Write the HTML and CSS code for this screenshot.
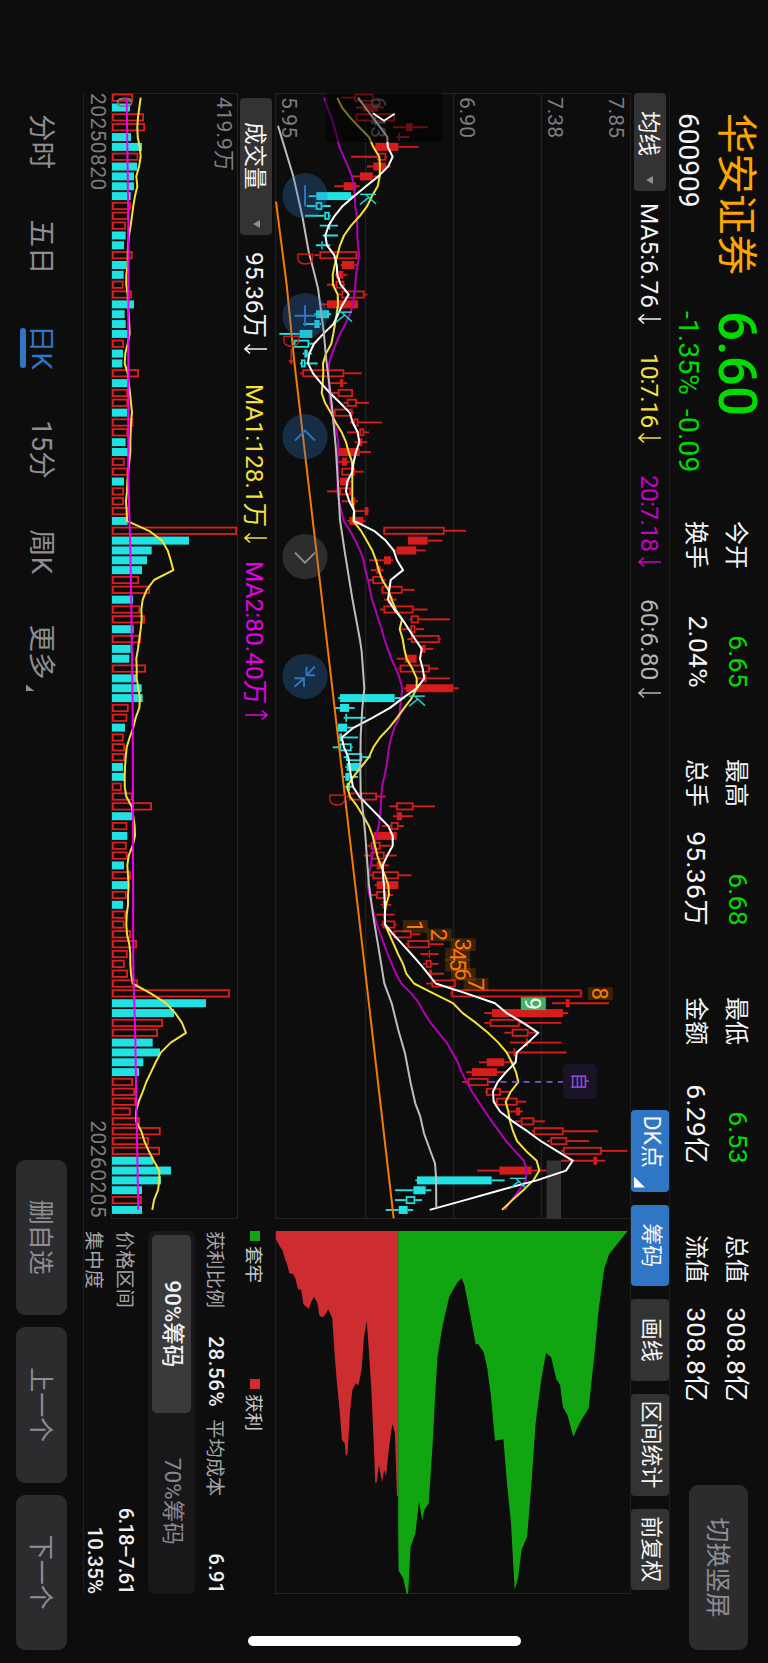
FILE: index.html
```html
<!DOCTYPE html>
<html lang="zh-CN">
<head>
<meta charset="UTF-8">
<meta name="viewport" content="width=device-width, initial-scale=1.0">
<title>华安证券 600909</title>
<link rel="stylesheet" href="styles.css">
</head>
<body>

<div class="page">
<div class="screen">

  <header class="header">
    <div class="title">
      <div class="name">华安证券</div>
      <div class="code">600909</div>
    </div>
    <div class="quote">
      <div class="price">6.60</div>
      <div class="change"><span>-1.35%</span><span>-0.09</span></div>
    </div>
    <div class="stats">
      <div class="stat"><span>今开</span><b class="down">6.65</b></div>
      <div class="stat"><span>最高</span><b class="down">6.68</b></div>
      <div class="stat"><span>最低</span><b class="down">6.53</b></div>
      <div class="stat"><span>总值</span><b>308.8亿</b></div>
      <div class="stat"><span>换手</span><b>2.04%</b></div>
      <div class="stat"><span>总手</span><b>95.36万</b></div>
      <div class="stat"><span>金额</span><b>6.29亿</b></div>
      <div class="stat"><span>流值</span><b>308.8亿</b></div>
    </div>
    <button class="switch">切换竖屏</button>
  </header>

  <main class="main">
    <div class="toolbar">
      <div class="select select-ma">均线<i class="caret"></i></div>
      <div class="ma ma5">MA5:6.76<svg class="arrow" viewBox="0 0 12 24"><path d="M6 1V23M1.5 18L6 23L10.5 18"/></svg></div>
      <div class="ma ma10">10:7.16<svg class="arrow" viewBox="0 0 12 24"><path d="M6 1V23M1.5 18L6 23L10.5 18"/></svg></div>
      <div class="ma ma20">20:7.18<svg class="arrow" viewBox="0 0 12 24"><path d="M6 1V23M1.5 18L6 23L10.5 18"/></svg></div>
      <div class="ma ma60">60:6.80<svg class="arrow" viewBox="0 0 12 24"><path d="M6 1V23M1.5 18L6 23L10.5 18"/></svg></div>
      <div class="tools">
        <div class="tool active dk">DK点<i class="corner"></i></div>
        <div class="tool active">筹码</div>
        <div class="tool">画线</div>
        <div class="tool wide">区间统计</div>
        <div class="tool">前复权</div>
      </div>
    </div>

    <div class="content">
      <section class="charts">
        <svg id="priceChart" class="price-chart" viewBox="0 0 1126 355"></svg>
        <div class="vol-bar">
          <div class="select select-vol">成交量<i class="caret"></i></div>
          <div class="ma vol">95.36万<svg class="arrow" viewBox="0 0 12 24"><path d="M6 1V23M1.5 18L6 23L10.5 18"/></svg></div>
          <div class="ma vol-ma1">MA1:128.1万<svg class="arrow" viewBox="0 0 12 24"><path d="M6 1V23M1.5 18L6 23L10.5 18"/></svg></div>
          <div class="ma vol-ma2">MA2:80.40万<svg class="arrow" viewBox="0 0 12 24"><path d="M6 23V1M1.5 6L6 1L10.5 6"/></svg></div>
        </div>
        <svg id="volChart" class="vol-chart" viewBox="0 0 1126 127"></svg>
        <div class="dates"><span>20250820</span><span>20260205</span></div>
      </section>

      <aside class="chips">
        <svg id="chipChart" class="chip-chart" viewBox="0 0 363 355"></svg>
        <div class="legend">
          <span><i class="dot green"></i>套牢</span>
          <span><i class="dot red"></i>获利</span>
        </div>
        <div class="chip-row">
          <span>获利比例</span><b class="ratio">28.56%</b><span>平均成本</span><b class="last">6.91</b>
        </div>
        <div class="chip-tabs">
          <div class="chip-tab active">90%筹码</div>
          <div class="chip-tab">70%筹码</div>
        </div>
        <div class="chip-list">
          <div class="chip-row"><span>价格区间</span><b class="last range">6.18–7.61</b></div>
          <div class="chip-row"><span>集中度</span><b class="last">10.35%</b></div>
        </div>
      </aside>
      <div class="home"></div>
    </div>
  </main>

  <footer class="footer">
    <nav class="periods">
      <a>分时</a>
      <a>五日</a>
      <a class="active">日K</a>
      <a>15分</a>
      <a>周K</a>
      <a class="more">更多<i class="corner"></i></a>
    </nav>
    <div class="actions">
      <button>删自选</button>
      <button>上一个</button>
      <button>下一个</button>
    </div>
  </footer>

</div>
</div>

<script src="chart.js"></script>
</body>
</html>
```
FILE: styles.css
```css
* {
  box-sizing: border-box;
}

body {
  margin: 0;
  background: #0d0d0d;
  color: #f5f5f5;
  font-family: Roboto, "Noto Sans CJK SC", sans-serif;
}

.page {
  width: 768px;
  height: 1663px;
  overflow: hidden;
}

/* landscape screen shown on a portrait page */
.screen {
  width: 1663px;
  height: 768px;
  transform-origin: 0 0;
  transform: translateX(768px) rotate(90deg);
  display: flex;
  flex-direction: column;
  white-space: nowrap;
}

b {
  font-weight: 400;
}

i {
  display: inline-block;
}

button {
  padding: 0 0 4px;
  border: none;
  border-radius: 9px;
  background: #2c2c2e;
  color: #8e8e93;
  font-family: inherit;
  font-size: 25px;
}

/* header */
.header {
  display: flex;
  height: 98px;
  padding-left: 113px;
}

.title {
  width: 198px;
}

.name {
  height: 62px;
  line-height: 64px;
  font-size: 40.5px;
  color: #ffa500;
}

.code {
  height: 36px;
  line-height: 36px;
  font-size: 28px;
}

.quote {
  width: 210px;
  color: #00dc00;
}

.price {
  height: 62px;
  line-height: 62px;
  font-size: 53px;
  font-weight: 500;
}

.change {
  display: flex;
  gap: 14px;
  height: 36px;
  line-height: 36px;
  font-size: 28px;
  letter-spacing: 0.2px;
}

.stats {
  display: grid;
  grid-template-columns: repeat(4, 167px);
  grid-auto-rows: 39.5px;
  column-gap: 71px;
  padding-top: 10px;
}

.stat {
  display: flex;
  justify-content: space-between;
  align-items: center;
  font-size: 24px;
}

.stat b {
  font-size: 26.5px;
  letter-spacing: 0.3px;
}

.down {
  color: #00dc00;
}

.switch {
  width: 165px;
  height: 59px;
  margin: 20px 0 0 83px;
}

/* indicator bars */
.main {
  width: 1501px;
  height: 587px;
  margin-left: 93px;
  border-bottom: 1px solid #1f1f1f;
}

.toolbar {
  display: flex;
  align-items: center;
  height: 40px;
  border-top: 1px solid #1f1f1f;
  border-bottom: 1px solid #1f1f1f;
}

.select {
  display: flex;
  align-items: center;
  height: 32px;
  padding-bottom: 2px;
  border-radius: 4px;
  background: #333;
  font-size: 22.5px;
}

.select-ma {
  width: 98px;
  padding-left: 18px;
  margin-right: 12px;
}

.caret {
  margin-left: 20px;
  margin-top: 2px;
  border: 4.5px solid transparent;
  border-top: 7px solid #8e8e93;
  border-bottom: none;
}

.ma {
  display: flex;
  align-items: center;
  font-size: 24.5px;
}

.arrow {
  width: 12px;
  height: 24px;
  margin-left: 5px;
  fill: none;
  stroke: currentColor;
  stroke-width: 1.6;
}

.ma5 {
  width: 150px;
}

.ma10 {
  width: 122px;
  color: #f5e13c;
  letter-spacing: -1px;
}

.ma20 {
  width: 124px;
  color: #c800c8;
  letter-spacing: -0.7px;
}

.ma60 {
  color: #b4b4b4;
}

.ma60 .arrow {
  margin-left: 7px;
}

.tools {
  display: flex;
  gap: 13px;
  margin-left: auto;
  margin-right: 4px;
}

.tool {
  position: relative;
  width: 81.5px;
  height: 38px;
  line-height: 36px;
  border-radius: 4px;
  background: #333;
  font-size: 22px;
  text-align: center;
}

.tool.active {
  background: #2f76c5;
}

.tool.wide {
  width: 102px;
}

.tool.dk {
  padding-right: 18px;
  font-size: 23px;
}

.corner {
  position: absolute;
  right: 4px;
  bottom: 3px;
  width: 11px;
  height: 11px;
  background: #fff;
  clip-path: polygon(100% 0, 100% 100%, 0 100%);
}

.vol-bar {
  display: flex;
  align-items: center;
  height: 37px;
}

.select-vol {
  width: 137px;
  margin-left: 5px;
  margin-right: 17px;
  padding-left: 24px;
}

.select-vol .caret {
  margin-left: 30px;
}

.vol {
  width: 132px;
}

.vol-ma1 {
  width: 177px;
  color: #f5e13c;
}

.vol-ma2 {
  color: #e600e6;
}

/* charts */
.content {
  position: relative;
  display: flex;
  gap: 12px;
}

.charts {
  width: 1126px;
}

.price-chart,
.vol-chart,
.chip-chart {
  display: block;
}

.price-chart {
  width: 1126px;
  height: 355px;
}

.vol-chart {
  width: 1126px;
  height: 127px;
}

.chip-chart {
  width: 363px;
  height: 355px;
}

.grid {
  stroke: #232323;
  stroke-width: 1.2;
}

.axis {
  fill: #7d7d82;
  font-size: 21px;
}

.line {
  fill: none;
  stroke-width: 2;
  stroke-linejoin: round;
}

.mark {
  font-size: 22px;
  text-anchor: middle;
}

.signal {
  font-size: 22px;
  font-weight: 300;
  text-anchor: middle;
}

.dates {
  display: flex;
  justify-content: space-between;
  height: 27px;
  line-height: 26px;
  padding: 0 1px 0 0;
  color: #7d7d82;
  font-size: 21px;
  letter-spacing: 0.4px;
}

/* chip distribution */
.chips {
  width: 363px;
}

.legend {
  display: flex;
  height: 42px;
  align-items: center;
  padding-bottom: 2px;
  font-size: 18.5px;
  color: #c8c8c8;
}

.legend span {
  display: flex;
  align-items: center;
  width: 148px;
}

.dot {
  width: 10px;
  height: 10px;
  margin-right: 5px;
}

.dot.green {
  background: #12a512;
}

.dot.red {
  background: #cd2d30;
}

.chip-row {
  display: flex;
  align-items: center;
  height: 35px;
  padding-bottom: 2px;
  font-size: 19.3px;
  color: #a5a5a8;
}

.chip-row b {
  font-size: 20.5px;
  font-weight: 500;
  color: #f0f0f0;
}

.chip-row .ratio {
  margin: 0 12px 0 28px;
  letter-spacing: 0.6px;
}

.chip-row .last {
  margin-left: auto;
}

.chip-row .range {
  letter-spacing: -0.9px;
}

.chip-tabs {
  display: flex;
  height: 47px;
  margin-top: 3px;
  padding: 4px;
  border-radius: 7px;
  background: #18181b;
}

.chip-tab {
  width: 178px;
  line-height: 37px;
  border-radius: 5px;
  text-align: center;
  font-size: 22.5px;
  color: #8a8a8e;
}

.chip-tab.active {
  background: #3a3a3c;
  color: #f0f0f0;
  font-weight: 500;
}

.chip-list {
  padding-top: 7px;
}

.chip-list .chip-row {
  height: 31px;
}

.home {
  position: absolute;
  left: 1543px;
  top: 109px;
  width: 10px;
  height: 273px;
  border-radius: 5px;
  background: #fff;
}

/* footer */
.footer {
  display: flex;
  justify-content: space-between;
  height: 83px;
  padding: 16px 13px 0 114px;
}

.periods {
  display: flex;
  gap: 50.5px;
  font-size: 27.5px;
  line-height: 52px;
  color: #8e8e93;
}

.periods a {
  position: relative;
}

.periods .active {
  color: #2f76c5;
}

.periods .active::after {
  content: "";
  position: absolute;
  left: 3px;
  top: 41px;
  width: 40px;
  height: 6px;
  border-radius: 3px;
  background: #2f76c5;
}

.more .corner {
  top: 32px;
  right: -12px;
  width: 7px;
  height: 9px;
  background: #8e8e93;
}

.actions {
  display: flex;
  gap: 12px;
}

.actions button {
  width: 155.5px;
  height: 51px;
}
```
FILE: chart.js
```js
var RED = "#d71c1c";
var CYAN = "#20e2e2";
var STEP = 9.843;

// low, body bottom, body top, high, kind (h hollow red, s solid red, c solid cyan, o hollow cyan)
var candles = `215,253,311,311,h 258,280,325,342,s 257,257,375,375,h 369,408,428,473,s 380,385,390,418,s
312,316,385,446,s 243,322,349,352,h 291,310,348,362,s 246,270,308,325,s 193,221,258,269,s
116,139,243,250,c 110,137,157,182,o 105,163,179,182,o 149,177,181,204,c 158,168,170,204,c
138,154,158,181,c 133,148,262,268,h 212,216,253,263,s 195,198,220,232,s 171,197,223,226,h
205,214,284,292,h 152,171,264,265,s 133,138,177,183,c 100,133,149,153,c 28,89,127,127,c
67,71,118,130,o 98,103,113,126,c 90,93,107,143,o 90,97,223,275,h 177,210,220,232,s
185,203,249,249,h 220,230,261,297,h 190,192,248,252,h 240,250,266,336,h 231,268,283,297,h
254,265,277,292,s 195,203,269,303,s 203,216,231,240,s 213,214,255,281,h 204,210,238,243,s
171,208,243,245,h 215,245,256,264,s 250,284,295,297,s 232,238,280,286,s 338,340,524,588,h
413,414,473,517,s 364,380,439,467,s 298,342,363,369,s 303,319,333,341,s 297,307,340,347,h
333,335,398,434,h 342,354,368,380,s 330,340,431,473,h 418,422,447,540,h 394,421,436,462,h
412,423,509,512,h 450,454,467,490,s 380,404,440,441,s 385,389,480,506,h 440,462,470,540,s
402,408,550,566,s 204,210,374,404,c 194,210,237,254,c 221,226,231,286,c 201,204,231,250,c
205,208,216,264,c 188,208,245,248,o 221,228,277,302,o 226,230,272,274,c 219,226,239,264,c
226,230,240,252,c 229,236,321,347,h 358,378,431,495,h 369,380,396,429,s 336,362,386,402,h
308,312,380,380,s 292,302,332,362,h 281,302,344,380,h 303,320,343,357,s 300,307,387,424,h
314,320,385,386,s 303,318,350,369,h 332,338,347,364,s 319,341,348,374,s 332,337,376,380,h
356,370,425,451,h 408,412,479,522,h 451,476,480,506,s 459,467,485,506,h 470,477,486,522,s
468,484,557,559,h 540,544,935,938,h 846,887,899,1017,s 643,666,879,895,s 643,659,749,874,h
703,725,776,800,h 720,768,774,874,s 706,730,736,890,s 627,650,703,737,s 588,606,681,705,s
577,593,656,660,h 645,648,693,720,h 670,678,743,769,h 716,738,750,759,s 735,752,793,825,h
785,790,881,984,h 831,841,892,957,h 872,879,996,1072,h 873,970,981,1006,s 621,688,785,830,s
436,441,665,704,c 375,430,467,484,c 375,407,436,456,o 347,386,413,429,c`.split(/\s+/).map(function (s) {
  return s.split(",");
});

var ma5 = [264,286,308,330,352,353,368,354,325,288,253,218,194,176,166,171,193,200,202,212,236,218,204,190,160,132,118,114,129,153,180,210,239,248,263,268,258,251,247,232,228,238,253,252,312,347,371,381,399,362,358,354,373,397,416,435,455,450,458,463,440,398,360,307,251,215,222,235,239,243,249,268,297,326,355,368,368,352,338,339,342,343,345,345,345,370,397,424,450,474,497,589,675,710,760,805,774,740,737,708,683,669,671,690,728,772,812,860,908,888,800,690,585,479];
var ma10 = [202,216,240,268,297,310,328,330,329,323,306,292,270,243,222,210,202,194,188,189,203,204,200,195,190,184,168,159,160,158,155,165,182,197,215,228,236,246,247,247,247,247,252,250,273,290,307,318,326,337,355,365,377,396,389,398,403,410,427,440,440,425,403,381,358,330,310,297,273,250,231,240,262,280,297,308,315,322,332,345,355,357,348,344,345,358,371,384,399,409,432,490,549,578,618,654,685,710,725,738,745,722,707,715,720,729,741,768,800,808,790,760,727,696];
var ma20 = [163,172,184,193,201,208,221,234,246,251,254,256,260,262,262,264,267,263,258,256,253,248,240,226,210,198,186,177,176,176,178,181,186,193,200,205,203,203,203,203,202,207,214,221,240,256,270,281,286,294,300,306,316,325,335,343,353,364,378,389,397,394,390,388,373,364,357,353,349,343,336,334,332,330,326,319,312,307,302,296,293,298,305,312,321,331,342,353,365,378,394,424,447,463,482,506,530,547,563,575,590,606,626,645,665,687,708,734,762,770,767,748,725,705];

// slow lines as x,value pairs
var ma60 = [[122,24],[274,70],[393,97],[500,116],[546,128],[610,144],[670,152],[740,161],[825,169],[955,185],[1085,197],[1195,204],[1305,210],[1405,225],[1540,247],[1665,270],[1700,275],[1810,283],[1870,277],[1950,272],[2050,271],[2120,272],[2180,279],[2250,286],[2350,293],[2400,297],[2495,310],[2615,330],[2695,343],[2755,365],[2835,385],[2905,405],[2995,422],[3055,436],[3095,451],[3145,462],[3195,480],[3235,495],[3275,498],[3370,499]];
var trend = [[350,18],[600,50],[830,73],[1665,170],[2490,266],[3400,371]];

var volumes = "159h 150c 192h 195h 153c 186c 175h 171c 162c 162c 152c 153h 146h 138h 137c 132c 158h 140c 131c 131h 156h 162c 134c 137c 143c 132h 129c 127c 177h 143c 144h 144h 142c 160h 144h 137c 144c 134h 144h 132c 132h 132h 150h 143c 471h 327c 215c 201c 186c 177h 210h 159c 180h 195h 161c 183h 152c 148c 198h 169c 185c 188c 146h 142h 135c 131h 135h 135h 129c 134c 125h 158h 216h 159c 142h 142c 140h 143h 132c 153h 146c 140h 129c 138h 134h 153h 171h 143h 134h 144h 174h 450h 378c 282c 249h 234h 218c 240c 190c 177c 159h 165h 168h 152h 180h 242h 207h 240h 220c 273c 243c 186c 186h 186c".split(" ");
var volMa1 = [182,178,174,172,173,179,182,177,169,172,165,160,156,152,147,144,143,143,139,139,143,144,146,148,149,143,136,134,143,146,150,153,156,153,152,151,151,148,145,142,141,138,140,141,207,246,263,272,280,222,200,188,184,185,182,178,174,169,170,170,175,180,178,167,160,149,140,137,135,134,134,139,155,160,164,165,158,146,142,144,146,144,144,140,139,141,148,151,151,153,158,212,258,286,306,318,272,243,227,213,199,188,176,168,168,184,193,206,221,238,238,234,222,217];
var volMa2 = [[38,140],[400,145],[1185,145],[1385,151],[1635,155],[1885,158],[2655,160],[2855,166],[3055,169],[3375,175]];

var chipRed = [[687,268],[697,290],[703,300],[708,322],[715,345],[720,370],[730,372],[735,385],[742,418],[750,420],[755,462],[768,477],[776,452],[782,440],[790,460],[795,497],[803,502],[812,490],[817,478],[827,505],[832,600],[838,690],[846,790],[851,870],[858,880],[861,918],[865,912],[871,790],[877,720],[885,700],[892,706],[900,660],[906,560],[913,513],[918,600],[924,710],[930,870],[934,1000],[938,995],[943,945],[951,997],[956,960],[961,978],[967,905],[973,850],[977,822],[983,850],[985,920],[988,1038],[991,1038]];
var chipGreen = [[991,1150],[992,1262],[1003,1283],[1012,1332],[1016,1330],[1022,1190],[1034,1150],[1043,1055],[1051,1112],[1056,1080],[1067,1060],[1077,880],[1083,740],[1089,620],[1102,525],[1118,440],[1137,400],[1149,384],[1156,405],[1168,480],[1184,583],[1190,582],[1204,607],[1213,655],[1222,740],[1232,872],[1253,868],[1262,1000],[1272,1120],[1281,1320],[1290,1280],[1298,1200],[1312,1160],[1323,1000],[1333,820],[1347,690],[1359,608],[1372,622],[1385,688],[1394,705],[1401,770],[1413,797],[1427,860],[1443,818],[1465,775],[1480,610],[1490,480],[1504,355],[1516,313],[1562,243]];

function X(k) { return 4.67 + STEP * k; }
function PX(n) { return n / 3 - 8; }
function priceY(c) { return (1080 - c) / 3; }
function volY(c) { return 158 - c / 3; }

function rect(x, y, w, h, attrs) {
  return '<rect x="' + x.toFixed(2) + '" y="' + y.toFixed(2) + '" width="' + w.toFixed(2) + '" height="' + h.toFixed(2) + '" ' + attrs + '/>';
}

function text(x, y, str, cls, fill) {
  return '<text class="' + cls + '" x="' + x + '" y="' + y + '"' + (fill ? ' fill="' + fill + '"' : "") + '>' + str + '</text>';
}

function path(x1, y1, x2, y2, attrs) {
  return '<line x1="' + x1 + '" y1="' + y1 + '" x2="' + x2 + '" y2="' + y2 + '" ' + attrs + '/>';
}

function line(points, color) {
  return '<polyline class="line" stroke="' + color + '" points="' + points.join(" ") + '"/>';
}

function series(values, y) {
  return values.map(function (v, k) { return X(k).toFixed(1) + "," + y(v).toFixed(1); });
}

function pairs(values, y) {
  return values.map(function (p) { return PX(p[0]).toFixed(1) + "," + y(p[1]).toFixed(1); });
}

function drawPrice() {
  var s = "";
  [88.7, 176.3, 264.3, 354.3].forEach(function (y) {
    s += path(0, y, 1126, y, 'class="grid"');
  });
  s += path(0.5, 0, 0.5, 355, 'class="grid"') + path(1125.5, 0, 1125.5, 355, 'class="grid"');
  s += text(4, 21, "7.85", "axis") + text(4, 82, "7.38", "axis") + text(4, 170.5, "6.90", "axis");
  s += text(4, 348, "5.95", "axis");
  s += rect(1067.5, 69, 58.5, 14.5, 'fill="#333"');

  candles.forEach(function (c, k) {
    var x = X(k), lo = priceY(c[0]), b = priceY(c[1]), t = priceY(c[2]), hi = priceY(c[3]);
    var hollow = c[4] == "h" || c[4] == "o";
    var color = c[4] == "h" || c[4] == "s" ? RED : CYAN;
    var wick = 'stroke="' + color + '" stroke-width="1.9"';
    s += path(x, hi, x, t, wick) + path(x, b, x, lo, wick);
    if (hollow) {
      s += rect(x - 3.1, t + 0.9, 6.2, Math.max(b - t - 1.8, 1), 'fill="none" stroke="' + color + '" stroke-width="1.8"');
    } else {
      s += rect(x - 4, t, 8, b - t, 'fill="' + color + '"');
    }
  });
  s += text(4, 259, "6.43", "axis");

  s += line(pairs(trend, priceY), "#f57c00");
  s += line(series(ma20, priceY), "#b400b4");
  s += line(series(ma10, priceY), "#f5e13c");
  s += line(series(ma5, priceY), "#fff");
  s += line(pairs(ma60, priceY), "#bebebe");

  // D / K signals
  [[341, 270], [694, 198], [1846, 416], [3293, 719]].forEach(function (p) {
    s += text(PX(p[0]), priceY(p[1]), "K", "signal", CYAN);
  });
  [[521, 81], [768, 40], [2144, 176]].forEach(function (p) {
    s += text(PX(p[0]), priceY(p[1]), "D", "signal", RED);
  });
  s += path(256, 338.7, 267, 338.7, 'stroke="' + RED + '" stroke-width="1.5"');
  s += '<path d="M267 336v5.5l5 -2.7z" fill="' + RED + '"/>';

  // nine turns counter
  [[49, 436], [75, 508], [104, 580], [134, 563], [165, 563], [193, 580], [223, 618], [251, 991], [281, 790]].forEach(function (p, i) {
    var x = PX(p[0] + 2475), y = priceY(p[1]);
    var nine = i == 8;
    s += rect(x - 6.4, y - 12.5, 12.8, 25, nine ? 'fill="#3fb364"' : 'fill="#ff7a00" fill-opacity=".2"');
    s += text(x, y + 8, i + 1, "mark", nine ? "#fff" : "#ff7a00");
  });

  s += '<line x1="' + X(100) + '" y1="141" x2="' + X(100) + '" y2="67" stroke="#8e4bd6" stroke-width="1.8" stroke-dasharray="6 5.5"/>';
  s += rect(971, 33, 35, 34, 'rx="5" fill="#1b1326"');
  s += '<text x="988.5" y="57" text-anchor="middle" font-size="18" fill="#9b51e0">自</text>';

  // drawer handle
  s += rect(0, 187, 49, 118, 'rx="3" fill="#000" fill-opacity=".5"');
  s += '<polyline points="20.3,257 27.7,246 20.7,235.3" fill="none" stroke="#fff" stroke-width="1.7"/>';

  // round buttons
  var icons = [
    "M-10.5 0H10.5",
    "M-10.5 0H10.5M0 -10.5V10.5",
    "M4 -10L-6 0L4 10",
    "M-4 -10L6 0L-4 10",
    "M-10 -10L-1 -1.5M-9.5 -1.5H-1V-10M10.5 10.5L2 1M2 10.5V1H10.5"
  ];
  [102.7, 222.7, 343.7, 463.7, 583.3].forEach(function (x, i) {
    var grey = i == 3;
    s += '<g transform="translate(' + x + ' 325)"><circle r="22.6" ' + (grey ? 'fill="#77777c" fill-opacity=".3"' : 'fill="#2f76c5" fill-opacity=".3"') + '/>';
    s += '<path d="' + icons[i] + '" fill="none" stroke="' + (grey ? "#8e8e93" : "#2f76c5") + '" stroke-width="1.9"/></g>';
  });
  document.getElementById("priceChart").innerHTML = s;
}

function drawVolume() {
  var s = path(0, 0.5, 1126, 0.5, 'class="grid"') + path(0, 126.5, 1126, 126.5, 'class="grid"');
  s += path(0.5, 0, 0.5, 127, 'class="grid"') + path(1125.5, 0, 1125.5, 127, 'class="grid"');
  volumes.forEach(function (v, k) {
    var top = volY(parseInt(v)), x = X(k);
    if (v.slice(-1) == "h") {
      s += rect(x - 3.2, top + 0.9, 6.4, 125.1 - top - 0.9, 'fill="none" stroke="#e01e1e" stroke-width="1.8"');
    } else {
      s += rect(x - 4, top, 8, 126 - top, 'fill="' + CYAN + '"');
    }
  });
  s += text(4, 21.5, "419.9", "axis") + text(57, 21.5, "万", "axis") + text(3.5, 121.5, "0", "axis");
  s += line(series(volMa1, volY), "#f5e13c");
  s += line(pairs(volMa2, volY), "#f000f0");
  document.getElementById("volChart").innerHTML = s;
}

function area(points, from, to, color) {
  var p = points.map(function (q) { return (q[1] / 3 - 81).toFixed(1) + "," + (630 - q[0] / 2.489).toFixed(1); });
  p.unshift("0," + (630 - from / 2.489).toFixed(1));
  p.push("0," + (630 - to / 2.489).toFixed(1));
  return '<polygon fill="' + color + '" points="' + p.join(" ") + '"/>';
}

function drawChips() {
  var s = path(0, 354.3, 363, 354.3, 'class="grid"') + path(362.5, 0, 362.5, 355, 'class="grid"');
  s += area(chipRed, 687, 991, "#cd2d30") + area(chipGreen, 991, 1562, "#12a512");
  document.getElementById("chipChart").innerHTML = s;
}

drawPrice();
drawVolume();
drawChips();
```
